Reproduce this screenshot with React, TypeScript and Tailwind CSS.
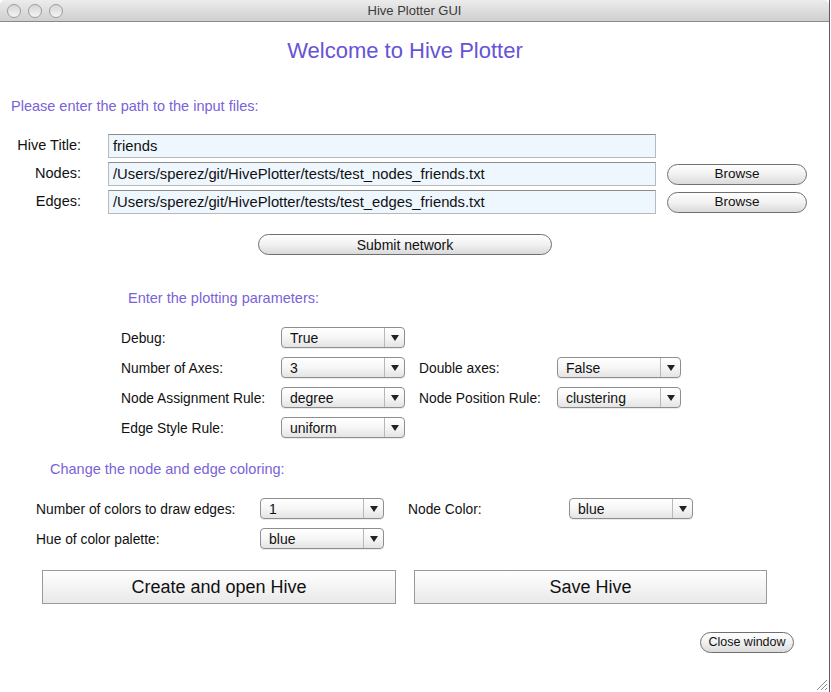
const font = { fontFamily: '"Liberation Sans", Arial, sans-serif' }

function Select({ value, w = 'w-[124px]' }: { value: string; w?: string }) {
  return (
    <div className={`${w} h-[21px] flex items-stretch rounded-[4px] border border-[#8e8e8e] bg-linear-to-b from-white via-[#f6f6f6] to-[#e4e4e4] shadow-[0_1px_0_rgba(0,0,0,0.08)]`}>
      <div className="flex-1 pl-[8px] pt-[1px] flex items-center text-[14px] leading-none text-[#111]">{value}</div>
      <div className="w-[20px] border-l border-[#b8b8b8] flex items-center justify-center">
        <svg width="8" height="6" viewBox="0 0 8 6">
          <path d="M0 0 L8 0 L4 6 Z" fill="#222" />
        </svg>
      </div>
    </div>
  )
}

function PillButton({ label, cls, text = 'text-[14px]' }: { label: string; cls: string; text?: string }) {
  return (
    <button className={`${cls} rounded-full border border-[#6f6f6f] bg-linear-to-b from-white via-[#f1f1f1] to-[#dadada] ${text} leading-none text-[#111] flex items-center justify-center`}>
      {label}
    </button>
  )
}

function PathRow({ label, value, browse }: { label: string; value: string; browse?: boolean }) {
  return (
    <div className="flex items-center h-[24px]">
      <div className="w-[81px] text-right text-[14.5px] text-[#111]">{label}</div>
      <div className="ml-[27px] w-[548px] h-[24px] bg-[#eef6fe] border border-[#b9b9b9] border-t-[#8c8c8c] pl-[4px] pt-[1px] flex items-center text-[14.8px] text-[#111]">
        {value}
      </div>
      {browse && <PillButton label="Browse" cls="ml-[11px] w-[140px] h-[21px]" text="text-[13.5px]" />}
    </div>
  )
}

const Section = ({ children, cls }: { children: string; cls: string }) => (
  <div className={`${cls} text-[14.5px] leading-[18px] text-[#7a62d8]`}>{children}</div>
)

const Label = ({ children, cls }: { children: string; cls: string }) => (
  <div className={`${cls} leading-none pt-[2px]`}>{children}</div>
)

export default function App() {
  return (
    <div className="w-[831px] h-[692px] bg-white" style={font}>
      <div className="relative w-[830px] h-[692px] border-r border-[#5c5c5c] overflow-hidden">
        {/* title bar */}
        <div className="h-[22px] border-b border-[#8a8a8a] bg-linear-to-b from-[#ececec] to-[#cfcfcf] rounded-t-[5px] flex items-center relative">
          <div className="flex gap-[7px] pl-[7px]">
            {[0, 1, 2].map(i => (
              <div key={i} className="w-[14px] h-[14px] rounded-full border border-[#9b9b9b] bg-linear-to-b from-[#d6d6d6] to-[#f4f4f4]" />
            ))}
          </div>
          <div className="absolute inset-0 flex items-center justify-center text-[13px] text-[#3a3a3a]">Hive Plotter GUI</div>
        </div>

        <div className="w-[810px] mt-[16px] text-center text-[22px] leading-[26px] text-[#6654d6]">Welcome to Hive Plotter</div>

        <Section cls="mt-[33px] pl-[11px]">Please enter the path to the input files:</Section>

        <div className="mt-[19px] flex flex-col gap-[4px]">
          <PathRow label="Hive Title:" value="friends" />
          <PathRow label="Nodes:" value="/Users/sperez/git/HivePlotter/tests/test_nodes_friends.txt" browse />
          <PathRow label="Edges:" value="/Users/sperez/git/HivePlotter/tests/test_edges_friends.txt" browse />
        </div>

        <div className="w-[810px] mt-[20px] flex justify-center">
          <PillButton label="Submit network" cls="w-[294px] h-[21px]" />
        </div>

        <Section cls="mt-[34px] pl-[128px]">Enter the plotting parameters:</Section>

        <div className="mt-[20px] pl-[121px] flex flex-col gap-[9px] text-[13.8px] text-[#111]">
          <div className="flex items-center">
            <Label cls="w-[160px]">Debug:</Label>
            <Select value="True" />
          </div>
          <div className="flex items-center">
            <Label cls="w-[160px]">Number of Axes:</Label>
            <Select value="3" />
            <Label cls="ml-[14px] w-[138px]">Double axes:</Label>
            <Select value="False" />
          </div>
          <div className="flex items-center">
            <Label cls="w-[160px]">Node Assignment Rule:</Label>
            <Select value="degree" />
            <Label cls="ml-[14px] w-[138px]">Node Position Rule:</Label>
            <Select value="clustering" />
          </div>
          <div className="flex items-center">
            <Label cls="w-[160px]">Edge Style Rule:</Label>
            <Select value="uniform" />
          </div>
        </div>

        <Section cls="mt-[22px] pl-[50px]">Change the node and edge coloring:</Section>

        <div className="mt-[20px] pl-[36px] flex flex-col gap-[9px] text-[13.8px] text-[#111]">
          <div className="flex items-center">
            <Label cls="w-[224px]">Number of colors to draw edges:</Label>
            <Select value="1" />
            <Label cls="ml-[24px] w-[161px]">Node Color:</Label>
            <Select value="blue" />
          </div>
          <div className="flex items-center">
            <Label cls="w-[224px]">Hue of color palette:</Label>
            <Select value="blue" />
          </div>
        </div>

        <div className="mt-[21px] pl-[42px] flex gap-[18px]">
          <button className="w-[354px] h-[34px] border border-[#9a9a9a] bg-linear-to-b from-white to-[#e9e9e9] text-[18px] text-[#111]">Create and open Hive</button>
          <button className="w-[353px] h-[34px] border border-[#9a9a9a] bg-linear-to-b from-white to-[#e9e9e9] text-[18px] text-[#111]">Save Hive</button>
        </div>

        <div className="mt-[28px] pl-[700px]">
          <PillButton label="Close window" cls="w-[94px] h-[21px]" text="text-[12.5px]" />
        </div>

        {/* resize grip */}
        <svg className="absolute right-[1px] bottom-[1px]" width="13" height="13" viewBox="0 0 13 13">
          <path d="M12 2 L2 12 M12 6 L6 12 M12 10 L10 12" stroke="#8a8a8a" strokeWidth="1" />
        </svg>
      </div>
    </div>
  )
}
